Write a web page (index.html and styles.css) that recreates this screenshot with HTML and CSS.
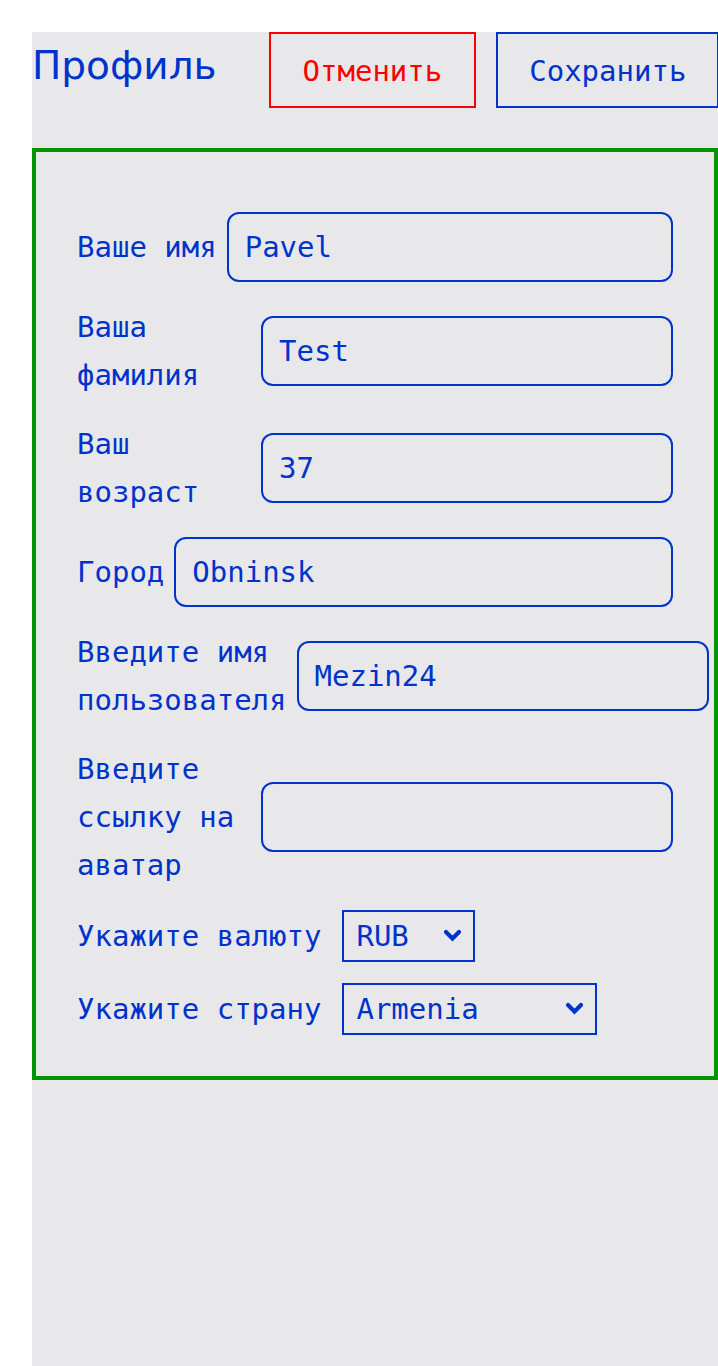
FILE: index.html
```html
<!DOCTYPE html>
<html lang="ru">
<head>
<meta charset="utf-8">
<title>Профиль</title>
<link rel="stylesheet" href="styles.css">
</head>
<body>
<div class="page">
  <header class="header">
    <h1 class="title">Профиль</h1>
    <button class="btn btn-cancel" type="button">Отменить</button>
    <button class="btn btn-save" type="button">Сохранить</button>
  </header>
  <form class="card">
    <div class="row">
      <label class="label" for="f1">Ваше имя</label>
      <input class="input" id="f1" type="text" value="Pavel">
    </div>
    <div class="row">
      <label class="label" for="f2">Ваша фамилия</label>
      <input class="input" id="f2" type="text" value="Test">
    </div>
    <div class="row">
      <label class="label" for="f3">Ваш возраст</label>
      <input class="input" id="f3" type="text" value="37">
    </div>
    <div class="row">
      <label class="label" for="f4">Город</label>
      <input class="input" id="f4" type="text" value="Obninsk">
    </div>
    <div class="row">
      <label class="label" for="f5">Введите имя пользователя</label>
      <input class="input" id="f5" type="text" value="Mezin24">
    </div>
    <div class="row">
      <label class="label" for="f6">Введите ссылку на аватар</label>
      <input class="input" id="f6" type="text" value="">
    </div>
    <div class="row row-select">
      <label class="label" for="f7">Укажите валюту</label>
      <span class="select-wrap">
        <select class="select" id="f7">
          <option>RUB</option>
          <option>EUR</option>
          <option>USD</option>
        </select>
        <svg class="chevron" width="19" height="13" viewBox="0 0 19 13" aria-hidden="true"><polyline points="3,3 9.5,9.5 16,3" fill="none" stroke="#0033cc" stroke-width="4.2" stroke-linecap="round" stroke-linejoin="miter"/></svg>
      </span>
    </div>
    <div class="row row-select">
      <label class="label" for="f8">Укажите страну</label>
      <span class="select-wrap">
        <select class="select" id="f8">
          <option>Armenia</option>
          <option>Belarus</option>
          <option>Kazakhstan</option>
          <option>Russia</option>
          <option>Ukraine</option>
        </select>
        <svg class="chevron" width="19" height="13" viewBox="0 0 19 13" aria-hidden="true"><polyline points="3,3 9.5,9.5 16,3" fill="none" stroke="#0033cc" stroke-width="4.2" stroke-linecap="round" stroke-linejoin="miter"/></svg>
      </span>
    </div>
  </form>
</div>
</body>
</html>
```
FILE: styles.css
```css
html, body {
  margin: 0;
  padding: 0;
  background: #ffffff;
}

body {
  overflow: hidden;
}

.page {
  margin: 32px 0 0 32px;
  min-height: calc(100vh - 32px);
  background: #e8e8eb;
  color: #0033cc;
  font-family: "DejaVu Sans Mono", monospace;
  font-size: 29px;
}

.header {
  display: flex;
  align-items: flex-start;
  gap: 20px;
}

.title {
  margin: 11px 32px 0 0;
  font-family: "DejaVu Sans", sans-serif;
  font-weight: normal;
  font-size: 39px;
  line-height: normal;
  color: #0033cc;
}

.btn {
  margin: 0;
  padding: 20px 31px 18px;
  background: transparent;
  font-family: "DejaVu Sans Mono", monospace;
  font-size: 29px;
  line-height: 34px;
  border: 2px solid;
  border-radius: 0;
  white-space: nowrap;
  cursor: pointer;
}

.btn-cancel {
  padding-left: 32px;
  padding-right: 32px;
  color: #ff0000;
  border-color: #ff0000;
}

.btn-save {
  color: #0033cc;
  border-color: #0033cc;
}

.card {
  margin-top: 40px;
  border: 4px solid #009600;
  padding: 60px 41px 41px;
  display: flex;
  flex-direction: column;
  gap: 21px;
}

.row {
  display: flex;
  align-items: center;
  gap: 10px;
}

.row-select {
  gap: 21px;
}

.label {
  flex: 0 1 auto;
  line-height: 48px;
  color: #0033cc;
}

.input {
  flex: 1 0 412px;
  box-sizing: border-box;
  height: 70px;
  margin: 0;
  padding: 0 16px;
  border: 2px solid #0033cc;
  border-radius: 12px;
  background: transparent;
  color: #0033cc;
  font-family: "DejaVu Sans Mono", monospace;
  font-size: 29px;
  outline: none;
}

.select-wrap {
  position: relative;
  display: inline-flex;
  flex: 0 0 auto;
}

.select {
  -webkit-appearance: none;
  appearance: none;
  box-sizing: border-box;
  height: 52px;
  margin: 0;
  padding: 0 64px 0 12px;
  border: 2px solid #0033cc;
  border-radius: 0;
  background: transparent;
  color: #0033cc;
  font-family: "DejaVu Sans Mono", monospace;
  font-size: 29px;
  outline: none;
}

.chevron {
  position: absolute;
  right: 13px;
  top: 50%;
  margin-top: -7px;
  pointer-events: none;
}
```
